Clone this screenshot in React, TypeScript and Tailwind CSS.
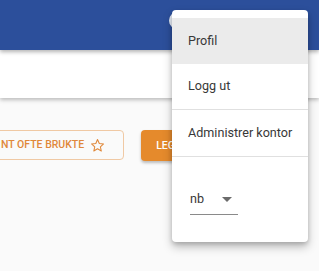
import React from "react";

export default function App() {
  return (
    <div className="relative w-[319px] h-[271px] overflow-hidden bg-[#fafafa] font-['Roboto',sans-serif]">
      <div className="relative z-20 h-[50px] bg-[#2c4f9b] shadow-[0_2px_4px_rgba(0,0,0,0.3)]">
        <div className="absolute left-[169px] top-[12px] h-[17px] w-[17px] rounded-full bg-[#e8eef8]" />
      </div>
      <div className="relative z-10 h-[48px] bg-white shadow-[0_2px_4px_rgba(0,0,0,0.25)]" />
      <div className="flex items-start gap-[17px] pt-[32px]">
        <div className="ml-[-40px] flex h-[30px] items-center gap-[6px] rounded-[4px] border border-[#f0c9a4] pl-[40px] pr-[18px] text-[10.5px] font-medium uppercase text-[#e0883a]">
          <span>NT OFTE BRUKTE</span>
          <svg width="15" height="15" viewBox="0 0 24 24" fill="none" stroke="#e0883a" strokeWidth="1.7" strokeLinejoin="round">
            <path d="M12 2.5l2.9 6.3 6.8.7-5.1 4.6 1.5 6.7L12 17.3l-5.9 3.5 1.5-6.7-5.1-4.6 6.8-.7z" />
          </svg>
        </div>
        <div className="flex h-[31px] w-[120px] items-center rounded-[4px] bg-[#e58a2c] pl-[15px] text-[10.5px] font-medium uppercase text-white shadow-[0_2px_3px_rgba(0,0,0,0.25)]">
          LEGG TIL
        </div>
      </div>

      <div className="absolute left-[172px] top-[10px] z-30 w-[136px] rounded-[4px] bg-white py-[8px] text-[12.6px] text-[#383838] shadow-[0_5px_10px_rgba(0,0,0,0.25),0_2px_4px_rgba(0,0,0,0.15)]">
        <div className="flex h-[46px] items-center bg-[#ebebeb] pl-[16px]">Profil</div>
        <div className="flex h-[46px] items-center border-b border-[#e0e0e0] pl-[16px]">Logg ut</div>
        <div className="flex h-[47px] items-center border-b border-[#e0e0e0] pl-[16px]">Administrer kontor</div>
        <div className="flex h-[77px] items-start pl-[18px] pt-[33px]">
          <div className="flex w-[48px] items-center justify-between border-b border-[#8a8a8a] pb-[5px]">
            <span>nb</span>
            <svg width="10" height="5" viewBox="0 0 10 5" className="mr-[6px]">
              <path d="M0 0h10L5 5z" fill="#6b6b6b" />
            </svg>
          </div>
        </div>
      </div>
    </div>
  );
}
